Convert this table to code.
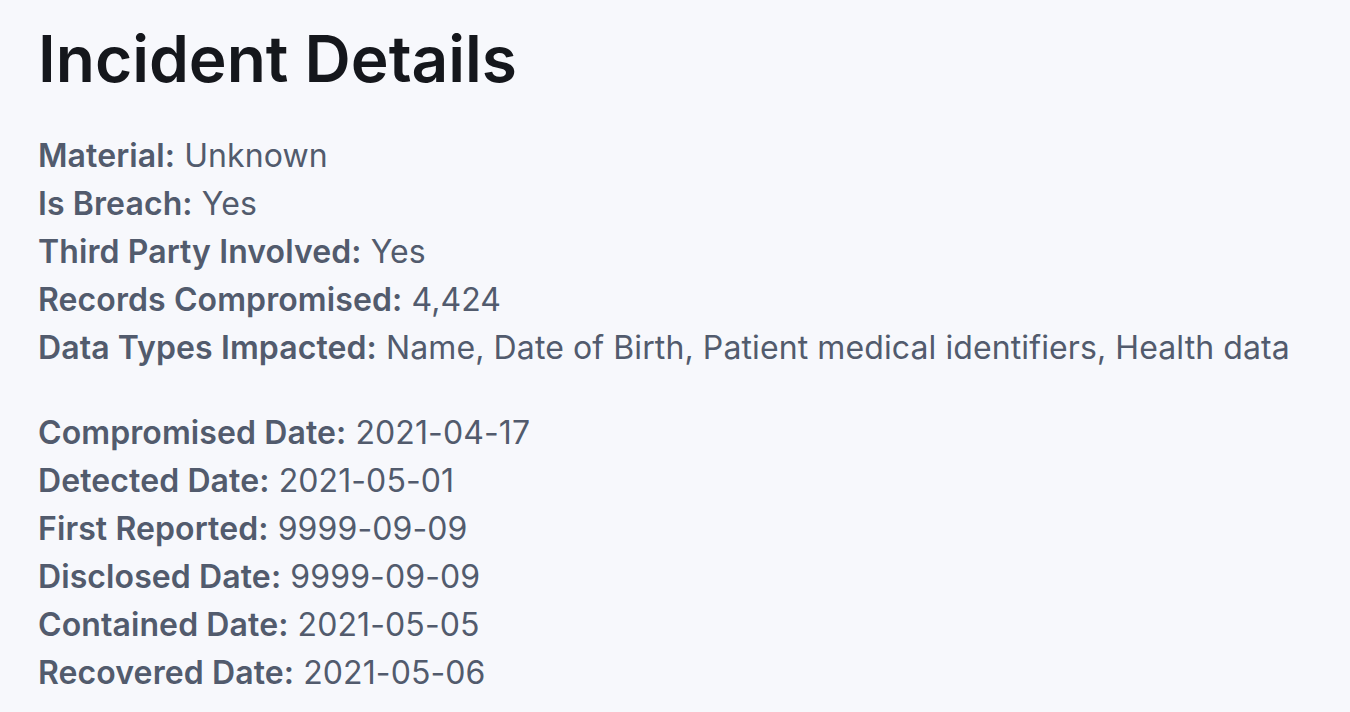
const primary = [
  ['Material', 'Unknown'],
  ['Is Breach', 'Yes'],
  ['Third Party Involved', 'Yes'],
  ['Records Compromised', '4,424'],
  ['Data Types Impacted', 'Name, Date of Birth, Patient medical identifiers, Health data'],
];

const dates = [
  ['Compromised Date', '2021-04-17'],
  ['Detected Date', '2021-05-01'],
  ['First Reported', '9999-09-09'],
  ['Disclosed Date', '9999-09-09'],
  ['Contained Date', '2021-05-05'],
  ['Recovered Date', '2021-05-06'],
];

function Field({ label, value }: { label: string; value: string }) {
  return (
    <p className="leading-[48px]">
      <span className="font-semibold">{label}:</span> {value}
    </p>
  );
}

export default function App() {
  return (
    <div className="min-h-[712px] bg-[#f7f8fc] px-[38px] pt-[15px] font-['Inter',sans-serif]">
      <h1 className="text-[64px] font-semibold leading-[88px] text-[#15171c]">
        Incident Details
      </h1>
      <div className="mt-[29px] text-[32px] tracking-[0.1px] text-[#525b6d]">
        {primary.map(([l, v]) => (
          <Field key={l} label={l} value={v} />
        ))}
      </div>
      <div className="mt-[37px] text-[32px] tracking-[0.1px] text-[#525b6d]">
        {dates.map(([l, v]) => (
          <Field key={l} label={l} value={v} />
        ))}
      </div>
    </div>
  );
}
